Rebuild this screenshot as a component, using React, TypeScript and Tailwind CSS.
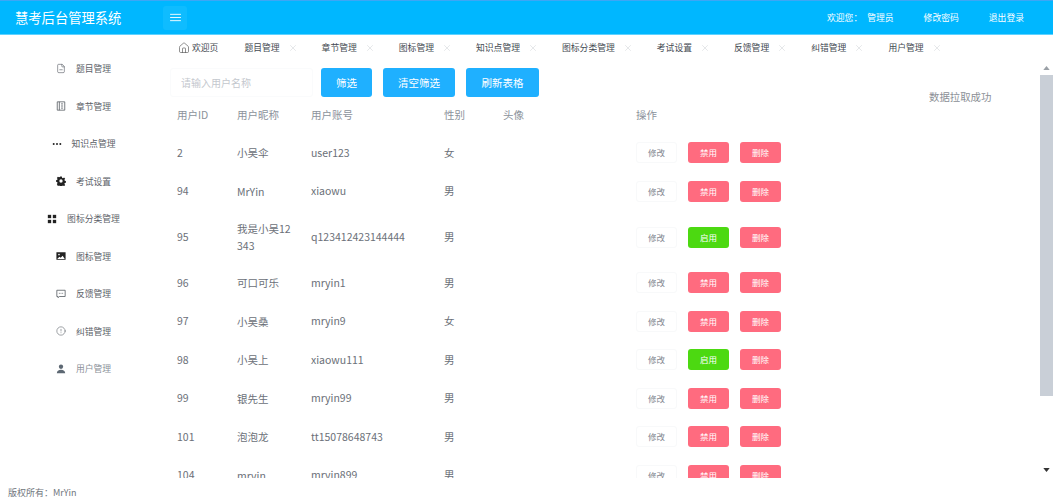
import { AlertCircle, FileMinus, Home, X } from "lucide-react";
import type { ReactNode } from "react";

const font = { fontFamily: '"Noto Sans CJK SC", "Noto Sans", sans-serif' };

const fill = "h-[10px] w-[10px] fill-current";
const line = "h-[10px] w-[10px] fill-none stroke-current";

const menu: { label: string; icon: ReactNode; muted?: boolean }[] = [
  { label: "题目管理", icon: <FileMinus className="h-[11px] w-[10px]" strokeWidth={1.5} /> },
  {
    label: "章节管理",
    icon: (
      <svg viewBox="0 0 12 12" className={line}>
        <path d="M1.500 1h9v10h-9zM4 1v10M6 3.500h2.500M6 6h2.500M6 8.500h2.500" />
      </svg>
    ),
  },
  {
    label: "知识点管理",
    icon: (
      <svg viewBox="0 0 12 12" className={`${fill} text-[#222]`}>
        <circle cx="2" cy="6" r="1.200" />
        <circle cx="6" cy="6" r="1.200" />
        <circle cx="10" cy="6" r="1.200" />
      </svg>
    ),
  },
  {
    label: "考试设置",
    icon: (
      <svg viewBox="0 0 12 12" className="h-[10px] w-[10px] fill-[#222]">
        <path
          fillRule="evenodd"
          d="M5 .6h2l.3 1.500 1.100.5 1.300-.8 1.300 1.500-.9 1.200.4 1.100 1.400.4v2l-1.400.4-.4 1.100.9 1.200-1.300 1.500-1.300-.8-1.100.5-.3 1.500H5l-.3-1.500-1.100-.5-1.300.8L1 9.700l.9-1.200-.4-1.100L.1 7V5l1.400-.4.4-1.100L1 2.300l1.300-1.500 1.300.8 1.100-.5zM6 4a2 2 0 1 0 0 4 2 2 0 0 0 0-4z"
        />
      </svg>
    ),
  },
  {
    label: "图标分类管理",
    icon: (
      <svg viewBox="0 0 12 12" className="h-[10px] w-[10px] fill-[#222]">
        <rect x="1" y="1" width="4" height="4" />
        <rect x="7" y="1" width="4" height="4" />
        <rect x="1" y="7" width="4" height="4" />
        <rect x="7" y="7" width="4" height="4" />
      </svg>
    ),
  },
  {
    label: "图标管理",
    icon: (
      <svg viewBox="0 0 12 12" className="h-[10px] w-[10px]">
        <rect x="0.5" y="1.500" width="11" height="9" fill="#222" />
        <circle cx="3.600" cy="4.200" r="1" fill="#fff" />
        <path d="M1.500 9.500l2.600-2.600 1.500 1.300L8 5.800l2.500 3.700z" fill="#fff" />
      </svg>
    ),
  },
  {
    label: "反馈管理",
    icon: (
      <svg viewBox="0 0 12 12" className={line}>
        <path d="M1 1.500h10v7.500H4L2.500 10.500V9H1z" />
        <path d="M3.500 5.200h1M5.500 5.200h1M7.500 5.200h1" />
      </svg>
    ),
  },
  { label: "纠错管理", icon: <AlertCircle className="h-[10px] w-[10px]" strokeWidth={1.4} /> },
  {
    label: "用户管理",
    muted: true,
    icon: (
      <svg viewBox="0 0 12 12" className="h-[10px] w-[10px] fill-[#5d6873]">
        <circle cx="6" cy="3.300" r="2.600" />
        <path d="M1 11.200c0-3 2-4.400 5-4.400s5 1.400 5 4.400z" />
      </svg>
    ),
  },
];

const tabs = [
  "题目管理",
  "章节管理",
  "图标管理",
  "知识点管理",
  "图标分类管理",
  "考试设置",
  "反馈管理",
  "纠错管理",
  "用户管理",
];

const users = [
  { id: "2", name: "小吴伞", account: "user123", sex: "女", on: true },
  { id: "94", name: "MrYin", account: "xiaowu", sex: "男", on: true },
  { id: "95", name: "我是小吴12343", account: "q123412423144444", sex: "男", on: false, tall: true },
  { id: "96", name: "可口可乐", account: "mryin1", sex: "男", on: true },
  { id: "97", name: "小吴桑", account: "mryin9", sex: "女", on: true },
  { id: "98", name: "小吴上", account: "xiaowu111", sex: "男", on: false },
  { id: "99", name: "银先生", account: "mryin99", sex: "男", on: true },
  { id: "101", name: "泡泡龙", account: "tt15078648743", sex: "男", on: true },
  { id: "104", name: "mryin", account: "mryin899", sex: "男", on: true },
];

function SmallButton({ label, className }: { label: string; className: string }) {
  return (
    <button className={`flex h-[21px] w-[41px] items-center justify-center rounded-[3px] text-[8.5px] ${className}`}>
      {label}
    </button>
  );
}

export default function App() {
  return (
    <div style={font} className="flex h-[500px] w-[1053px] flex-col overflow-hidden bg-white">
      <header className="flex h-[35px] shrink-0 items-center border-t border-b border-t-[#3ea6f5] border-b-[#5fd2ff] bg-[#00b7ff] pl-[15px] text-white">
        <div className="w-[148px] text-[13.3px]">慧考后台管理系统</div>
        <button className="flex h-[24px] w-[24px] items-center justify-center rounded-[3px] bg-[#0fbcff]">
          <svg viewBox="0 0 12 10" className="h-[9px] w-[11px] fill-none stroke-white">
            <path d="M0 1.500h12M0 5h12M0 8.500h12" />
          </svg>
        </button>
        <div className="ml-auto flex items-center pr-[29px] text-[8.8px]">
          <span>欢迎您：</span>
          <span className="ml-[5px]">管理员</span>
          <span className="ml-[30px]">修改密码</span>
          <span className="ml-[30px]">退出登录</span>
        </div>
      </header>

      <div className="flex min-h-0 flex-1">
        <aside className="flex w-[167px] shrink-0 flex-col pt-[15px]">
          {menu.map((item) => (
            <div
              key={item.label}
              className={`flex h-[37.5px] items-center justify-center gap-[10px] text-[8.8px] ${
                item.muted ? "text-[#8a9099]" : "text-[#5c6168]"
              }`}
            >
              {item.icon}
              <span>{item.label}</span>
            </div>
          ))}
        </aside>

        <main className="relative flex min-w-0 flex-1 flex-col">
          <nav className="flex h-[26px] shrink-0 items-center pl-[11px] text-[8.8px] text-[#444a52]">
            <Home className="mr-[2px] h-[12px] w-[12px] text-[#555]" strokeWidth={1.3} />
            <span className="mr-[26px]">欢迎页</span>
            {tabs.map((tab) => (
              <span key={tab} className="flex items-center">
                <span>{tab}</span>
                <X className="ml-[8px] mr-[24px] h-[10px] w-[10px] text-[#d5d8dc]" strokeWidth={1.5} />
              </span>
            ))}
          </nav>

          <div className="flex min-h-0 flex-1">
            <div className="min-w-0 flex-1 overflow-hidden pl-[3px]">
              <div className="mt-[7px] flex h-[29px] gap-[11px]">
                <input
                  placeholder="请输入用户名称"
                  className="w-[143px] rounded-[3px] border border-[#fafbfc] px-[10px] text-[10px] outline-none placeholder:text-[#c4c8ce]"
                  style={font}
                />
                <button className="-ml-[3px] h-[29px] w-[51px] rounded-[3px] bg-[#1fb0ff] text-[10.5px] text-white">筛选</button>
                <button className="h-[29px] w-[72px] rounded-[3px] bg-[#1fb0ff] text-[10.5px] text-white">清空筛选</button>
                <button className="h-[29px] w-[73px] rounded-[3px] bg-[#1fb0ff] text-[10.5px] text-white">刷新表格</button>
              </div>

              <div className="flex h-[36.5px] items-center pl-[7px] text-[10.5px] text-[#8b929b]">
                <div className="w-[60px]">用户ID</div>
                <div className="w-[74px]">用户昵称</div>
                <div className="w-[133px]">用户账号</div>
                <div className="w-[59px]">性别</div>
                <div className="w-[133px]">头像</div>
                <div>操作</div>
              </div>

              {users.map((user) => (
                <div
                  key={user.id}
                  className={`flex items-center pl-[7px] text-[10.5px] text-[#6b7078] ${
                    user.tall ? "h-[53px]" : "h-[38.5px]"
                  }`}
                >
                  <div className="w-[60px]">{user.id}</div>
                  <div className="w-[74px] pr-[16px] leading-[17px] break-all">{user.name}</div>
                  <div className="w-[133px]">{user.account}</div>
                  <div className="w-[59px]">{user.sex}</div>
                  <div className="w-[133px]" />
                  <div className="flex gap-[11px]">
                    <SmallButton label="修改" className="border border-[#f8f9fa] text-[#7f868f]" />
                    <SmallButton
                      label={user.on ? "禁用" : "启用"}
                      className={user.on ? "bg-[#ff6b7f] text-white" : "bg-[#4cd911] text-white"}
                    />
                    <SmallButton label="删除" className="bg-[#ff6b7f] text-white" />
                  </div>
                </div>
              ))}
            </div>

            <div className="flex w-[13px] shrink-0 flex-col items-center">
              <svg viewBox="0 0 8 5" className="mt-[5px] h-[4px] w-[7px] fill-[#9aa0a6]">
                <path d="M4 0l4 5H0z" />
              </svg>
              <div className="mt-[5px] h-[321px] w-full bg-[#c9cfd7]" />
              <svg viewBox="0 0 8 5" className="mt-[72px] h-[4px] w-[7px] fill-[#333]">
                <path d="M0 0h8L4 5z" />
              </svg>
            </div>
          </div>

          <div className="absolute left-[762px] top-[54px] text-[10.4px] text-[#8b8f96]">数据拉取成功</div>
        </main>
      </div>

      <footer className="flex h-[22px] shrink-0 items-center pl-[8px] pt-[8px] text-[9px] text-[#6f757c]">版权所有：MrYin</footer>
    </div>
  );
}
